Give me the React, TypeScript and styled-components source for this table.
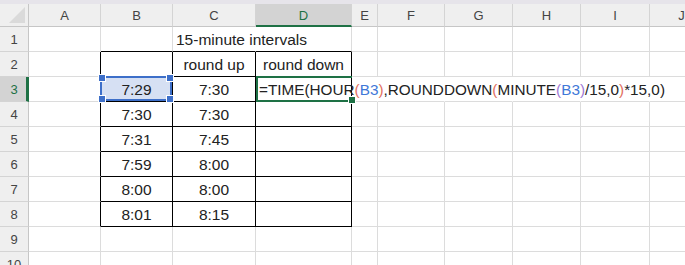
import React from 'react';
import styled, { createGlobalStyle, css } from 'styled-components';

const GlobalStyle = createGlobalStyle`
  html, body {
    margin: 0;
    padding: 0;
    background: #ffffff;
  }
  body {
    font-family: 'Liberation Sans', Arial, sans-serif;
  }
`;

const COLS = ['A', 'B', 'C', 'D', 'E', 'F', 'G', 'H', 'I', 'J'];
const COL_WIDTHS = [72, 72, 83, 96, 26, 67, 68, 68, 69, 64];
const ROW_COUNT = 10;

const GRID = '#dcdcdc';
const INK = '#000000';
const GREEN = '#1e7145';
const BLUE = '#3d6fc9';

const Sheet = styled.div`
  display: grid;
  grid-template-columns: 29px ${COL_WIDTHS.map((w) => `${w}px`).join(' ')};
  grid-template-rows: 4px 23px repeat(${ROW_COUNT}, 25px);
  width: 685px;
  height: 265px;
  overflow: hidden;
  background: #ffffff;
`;

const TopStrip = styled.div`
  grid-column: 1 / -1;
  background: #e6e4ea;
`;

const Corner = styled.div`
  position: relative;
  background: #efefef;
  border-right: 1px solid #c6c6c6;
  border-bottom: 1px solid #c6c6c6;
  box-sizing: border-box;

  &::after {
    content: '';
    position: absolute;
    right: 3px;
    bottom: 3px;
    width: 0;
    height: 0;
    border-left: 16px solid transparent;
    border-bottom: 16px solid #dadada;
  }
`;

const ColHeader = styled.div<{ $active?: boolean }>`
  display: flex;
  align-items: center;
  justify-content: center;
  box-sizing: border-box;
  font-size: 13px;
  color: #444444;
  background: #efefef;
  border-right: 1px solid #d4d4d4;
  border-bottom: 1px solid #c6c6c6;
  padding-top: 1px;

  ${({ $active }) =>
    $active &&
    css`
      background: #d3d3d3;
      color: ${GREEN};
      border-bottom: 2px solid ${GREEN};
    `}
`;

const RowHeader = styled.div<{ $active?: boolean }>`
  display: flex;
  align-items: center;
  justify-content: center;
  box-sizing: border-box;
  font-size: 13px;
  color: #444444;
  background: #efefef;
  border-right: 1px solid #c6c6c6;
  border-bottom: 1px solid #d4d4d4;
  padding-top: 1px;

  ${({ $active }) =>
    $active &&
    css`
      background: #d3d3d3;
      color: ${GREEN};
      border-right: 3px solid ${GREEN};
      padding-left: 2px;
    `}
`;

type Edge = 'grid' | 'ink' | 'none';
type Align = 'left' | 'center';

const edgeColor = (e: Edge) => (e === 'ink' ? INK : e === 'grid' ? GRID : 'transparent');

const Cell = styled.div<{ $right: Edge; $bottom: Edge; $align: Align; $lift?: boolean }>`
  position: relative;
  display: flex;
  align-items: center;
  justify-content: ${({ $align }) => ($align === 'center' ? 'center' : 'flex-start')};
  box-sizing: border-box;
  padding: 2px 3px 0;
  font-size: 15.5px;
  color: #222222;
  white-space: nowrap;
  overflow: visible;
  border-right: 1px solid ${({ $right }) => edgeColor($right)};
  border-bottom: 1px solid ${({ $bottom }) => edgeColor($bottom)};
  z-index: ${({ $lift }) => ($lift ? 2 : 'auto')};
`;

const CellText = styled.span`
  position: relative;
  z-index: 2;
`;

const SelectionFill = styled.div`
  position: absolute;
  top: -1px;
  left: -1px;
  right: 0;
  bottom: 0;
  box-sizing: border-box;
  background: #d6e0f3;
  border: 2px solid ${BLUE};
  z-index: 1;
`;

const Handle = styled.span<{ $x: 'left' | 'right'; $y: 'top' | 'bottom'; $color: string }>`
  position: absolute;
  width: 6px;
  height: 6px;
  background: ${({ $color }) => $color};
  border: 1px solid #ffffff;
  ${({ $x }) => ($x === 'left' ? 'left: -4px;' : 'right: -4px;')}
  ${({ $y }) => ($y === 'top' ? 'top: -4px;' : 'bottom: -4px;')}
`;

const ActiveFrame = styled.div`
  position: absolute;
  top: -1px;
  left: 0;
  right: -1px;
  bottom: -1px;
  box-sizing: border-box;
  border-top: 2px solid ${GREEN};
  border-left: 2px solid ${GREEN};
  border-bottom: 2px solid ${GREEN};
  z-index: 1;
  pointer-events: none;
`;

const Formula = styled.span`
  position: relative;
  z-index: 3;
  font-size: 15.3px;
  color: #222222;
`;

const Tok = styled.span<{ $c: string }>`
  color: ${({ $c }) => $c};
`;

const PAREN2 = '#e2705f';
const PAREN3 = '#a07ad6';
const REF = '#3f78d8';

// rows are 1-based, columns 0-based (A = 0)
const boxed = (r: number, c: number) => r >= 2 && r <= 8 && c >= 1 && c <= 3;

const values: Record<string, string> = {
  '1-2': '15-minute intervals',
  '2-2': 'round up',
  '2-3': 'round down',
  '3-1': '7:29',
  '3-2': '7:30',
  '4-1': '7:30',
  '4-2': '7:30',
  '5-1': '7:31',
  '5-2': '7:45',
  '6-1': '7:59',
  '6-2': '8:00',
  '7-1': '8:00',
  '7-2': '8:00',
  '8-1': '8:01',
  '8-2': '8:15',
};

const FormulaText: React.FC = () => (
  <Formula>
    =TIME(HOUR<Tok $c={PAREN2}>(</Tok>
    <Tok $c={REF}>B3</Tok>
    <Tok $c={PAREN2}>)</Tok>,ROUNDDOWN<Tok $c={PAREN2}>(</Tok>MINUTE<Tok $c={PAREN3}>(</Tok>
    <Tok $c={REF}>B3</Tok>
    <Tok $c={PAREN3}>)</Tok>/15,0<Tok $c={PAREN2}>)</Tok>*15,0)
  </Formula>
);

const rightEdge = (r: number, c: number): Edge => {
  if (boxed(r, c) || (c === 0 && r >= 2 && r <= 8)) return 'ink';
  if (r === 1 && c === 2) return 'none';
  if (r === 3 && c >= 3) return 'none';
  return 'grid';
};

const bottomEdge = (r: number, c: number): Edge => {
  if (boxed(r, c) || (r === 1 && c >= 1 && c <= 3)) return 'ink';
  return 'grid';
};

const App: React.FC = () => {
  const rows = Array.from({ length: ROW_COUNT }, (_, i) => i + 1);

  return (
    <>
      <GlobalStyle />
      <Sheet>
        <TopStrip />
        <Corner />
        {COLS.map((col) => (
          <ColHeader key={col} $active={col === 'D'}>
            {col}
          </ColHeader>
        ))}
        {rows.map((r) => (
          <React.Fragment key={r}>
            <RowHeader $active={r === 3}>{r}</RowHeader>
            {COLS.map((col, c) => {
              const value = values[`${r}-${c}`];
              const selected = r === 3 && c === 1;
              const active = r === 3 && c === 3;
              return (
                <Cell
                  key={col}
                  $right={rightEdge(r, c)}
                  $bottom={bottomEdge(r, c)}
                  $align={r === 1 || active ? 'left' : 'center'}
                  $lift={active || (r === 1 && c === 2)}
                >
                  {selected && (
                    <SelectionFill>
                      <Handle $x="left" $y="top" $color={BLUE} />
                      <Handle $x="right" $y="top" $color={BLUE} />
                      <Handle $x="left" $y="bottom" $color={BLUE} />
                      <Handle $x="right" $y="bottom" $color={BLUE} />
                    </SelectionFill>
                  )}
                  {active && (
                    <ActiveFrame>
                      <Handle $x="right" $y="bottom" $color={GREEN} />
                    </ActiveFrame>
                  )}
                  {active ? <FormulaText /> : value && <CellText>{value}</CellText>}
                </Cell>
              );
            })}
          </React.Fragment>
        ))}
      </Sheet>
    </>
  );
};

export default App;
